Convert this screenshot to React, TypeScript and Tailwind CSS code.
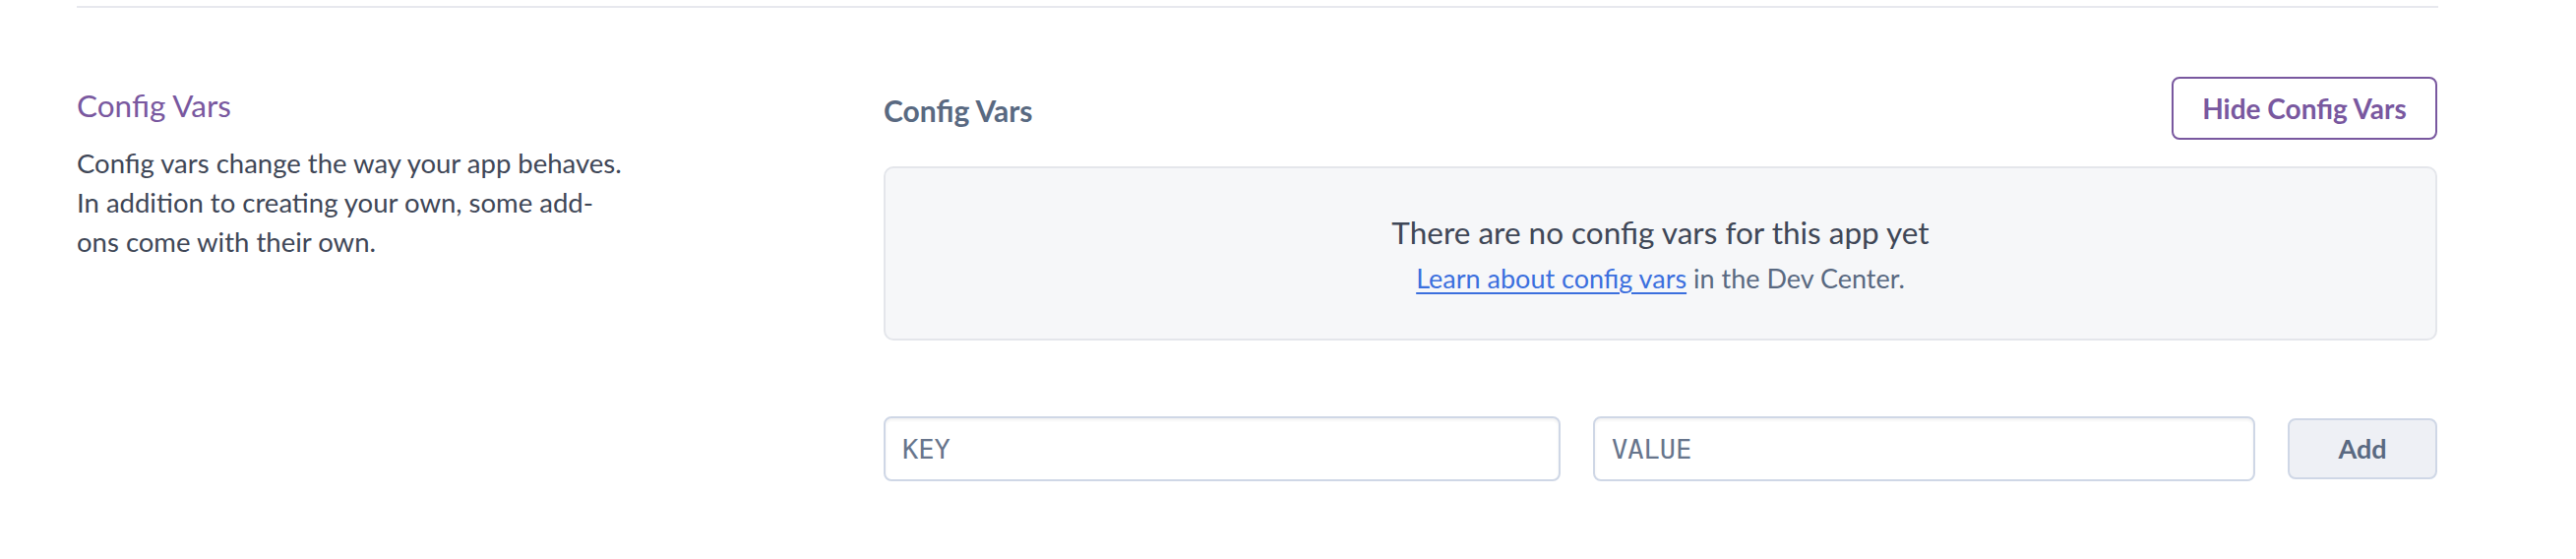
export default function App() {
  return (
    <div className="min-h-[568px] w-full bg-white pl-[78px] font-['Lato',sans-serif]">
      <div className="w-[2400px]">
        <div className="mt-[6px] h-[2px] bg-[#e7e8ee]" />

        <div className="flex pt-[70px]">
          {/* left description column */}
          <div className="w-[820px] shrink-0">
            <h2 className="mt-[10px] text-[31.5px] leading-[38px] text-[#79589f]">Config Vars</h2>
            <p className="mt-[20px] text-[27.5px] leading-[40px] text-[#3f4757]">
              Config vars change the way your app behaves.
              <br />
              In addition to creating your own, some add-
              <br />
              ons come with their own.
            </p>
          </div>

          {/* right content column */}
          <div className="w-[1579px] shrink-0">
            <div className="flex h-[64px] items-center justify-between">
              <h3 className="mt-[4px] text-[30px] font-bold leading-[36px] text-[#596981]">Config Vars</h3>
              <button className="flex h-[64px] w-[270px] items-center justify-center rounded-[8px] border-2 border-[#79589f] bg-white text-[28px] font-bold text-[#79589f]">
                Hide Config Vars
              </button>
            </div>

            <div className="mt-[27px] flex h-[177px] flex-col items-center rounded-[10px] border-2 border-[#e4e6eb] bg-[#f6f7f9] pt-[46px]">
              <div className="text-[31.5px] leading-[38px] text-[#3f4757]">There are no config vars for this app yet</div>
              <div className="mt-[10px] text-[27px] leading-[36px] text-[#596981]">
                <a href="#" className="text-[#3b6fde] underline underline-offset-[4px]">
                  Learn about config vars
                </a>{" "}
                in the Dev Center.
              </div>
            </div>

            <div className="mt-[77px] flex items-center gap-[33px]">
              <input
                placeholder="KEY"
                className="h-[66px] w-[688px] rounded-[8px] border-2 border-[#cfd7e6] bg-white px-[17px] font-['DejaVu_Sans_Mono',monospace] text-[27px] text-[#3f4757] shadow-[inset_0_2px_3px_rgba(0,0,0,0.06)] outline-none placeholder:text-[#67758c]"
              />
              <input
                placeholder="VALUE"
                className="h-[66px] w-[673px] rounded-[8px] border-2 border-[#cfd7e6] bg-white px-[17px] font-['DejaVu_Sans_Mono',monospace] text-[27px] text-[#3f4757] shadow-[inset_0_2px_3px_rgba(0,0,0,0.06)] outline-none placeholder:text-[#67758c]"
              />
              <button className="flex h-[62px] w-[152px] items-center justify-center rounded-[8px] border-2 border-[#cfd7e6] bg-[#eef0f5] text-[27px] font-bold text-[#596981]">
                Add
              </button>
            </div>
          </div>
        </div>
      </div>
    </div>
  );
}
